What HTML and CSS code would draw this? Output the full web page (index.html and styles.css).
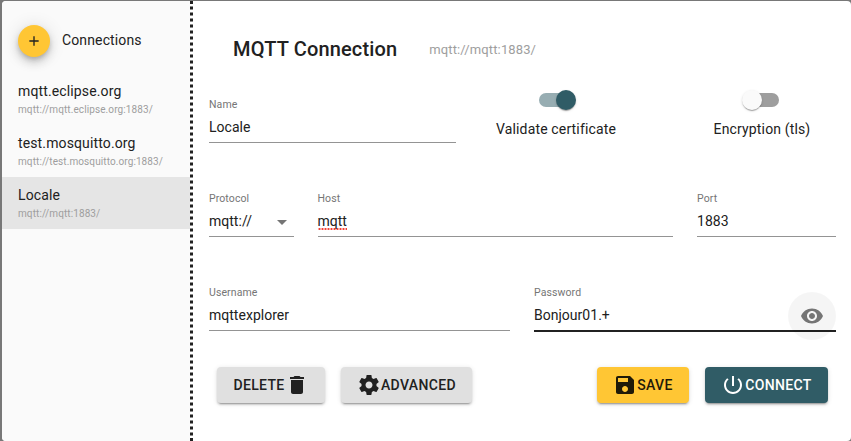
FILE: index.html
```html
<!DOCTYPE html>
<html lang="en">
<head>
<meta charset="utf-8">
<title>MQTT Connection</title>
<link rel="stylesheet" href="styles.css">
</head>
<body>
<div class="dialog">
  <aside class="sidebar">
    <div class="sidebar-head">
      <span class="add"><svg viewBox="0 0 24 24" width="16" height="16"><path d="M19 13h-6v6h-2v-6H5v-2h6V5h2v6h6v2z"/></svg></span>
      <span class="sidebar-title">Connections</span>
    </div>
    <ul class="list">
      <li class="item"><div class="item-name">mqtt.eclipse.org</div><div class="item-url">mqtt://mqtt.eclipse.org:1883/</div></li>
      <li class="item"><div class="item-name">test.mosquitto.org</div><div class="item-url">mqtt://test.mosquitto.org:1883/</div></li>
      <li class="item selected"><div class="item-name">Locale</div><div class="item-url">mqtt://mqtt:1883/</div></li>
    </ul>
  </aside>
  <main class="main">
    <header class="header"><h1 class="title">MQTT Connection</h1><span class="url">mqtt://mqtt:1883/</span></header>
    <div class="row row-name">
      <div class="field"><div class="label">Name</div><div class="value">Locale</div></div>
      <div class="toggle"><span class="switch on"><i class="thumb"></i></span><span class="toggle-label">Validate certificate</span></div>
      <div class="toggle"><span class="switch"><i class="thumb"></i></span><span class="toggle-label">Encryption (tls)</span></div>
    </div>
    <div class="row row-host">
      <div class="field"><div class="label">Protocol</div><div class="value select">mqtt://<svg viewBox="0 0 24 24" width="24" height="24"><path d="M7 10l5 5 5-5z"/></svg></div></div>
      <div class="field"><div class="label">Host</div><div class="value"><span class="misspelled">mqtt</span></div></div>
      <div class="field"><div class="label">Port</div><div class="value">1883</div></div>
    </div>
    <div class="row row-auth">
      <div class="field"><div class="label">Username</div><div class="value">mqttexplorer</div></div>
      <div class="field focused"><div class="label">Password</div><div class="value">Bonjour01.+</div>
        <span class="eye"><svg viewBox="0 0 24 24" width="24" height="24"><path d="M12 4.500C7 4.500 2.730 7.610 1 12c1.730 4.390 6 7.500 11 7.500s9.270-3.110 11-7.500c-1.730-4.390-6-7.500-11-7.500zM12 17c-2.760 0-5-2.240-5-5s2.240-5 5-5 5 2.240 5 5-2.240 5-5 5zm0-8c-1.660 0-3 1.340-3 3s1.340 3 3 3 3-1.340 3-3-1.340-3-3-3z"/></svg></span></div>
    </div>
    <footer class="actions">
      <span class="btn delete">DELETE<svg viewBox="0 0 24 24" width="24" height="24"><path d="M6 19c0 1.100.900 2 2 2h8c1.100 0 2-.900 2-2V7H6v12zM19 4h-3.500l-1-1h-5l-1 1H5v2h14V4z"/></svg></span>
      <span class="btn advanced"><svg viewBox="0 0 24 24" width="24" height="24"><path d="M19.430 12.980c.040-.320.070-.640.070-.980s-.030-.660-.070-.980l2.110-1.650c.190-.150.240-.420.120-.640l-2-3.460c-.120-.220-.390-.300-.610-.220l-2.490 1c-.520-.400-1.080-.730-1.690-.980l-.380-2.650C14.460 2.180 14.250 2 14 2h-4c-.250 0-.460.180-.490.420l-.380 2.650c-.610.250-1.170.590-1.690.980l-2.490-1c-.230-.090-.490 0-.610.220l-2 3.460c-.130.220-.070.490.120.640l2.110 1.650c-.040.320-.070.650-.070.980s.030.660.070.980l-2.110 1.650c-.190.150-.240.420-.120.640l2 3.460c.120.220.390.300.610.220l2.490-1c.520.400 1.080.730 1.690.980l.380 2.650c.030.240.240.420.490.420h4c.250 0 .460-.180.490-.420l.380-2.650c.610-.250 1.170-.590 1.690-.980l2.490 1c.230.090.490 0 .610-.220l2-3.460c.120-.220.070-.490-.120-.640l-2.110-1.650zM12 15.500c-1.930 0-3.500-1.570-3.500-3.500s1.570-3.500 3.500-3.500 3.500 1.570 3.500 3.500-1.570 3.500-3.500 3.500z"/></svg>ADVANCED</span>
      <span class="spacer"></span>
      <span class="btn save"><svg viewBox="0 0 24 24" width="24" height="24"><path d="M17 3H5c-1.110 0-2 .900-2 2v14c0 1.100.890 2 2 2h14c1.100 0 2-.900 2-2V7l-4-4zm-5 16c-1.660 0-3-1.340-3-3s1.340-3 3-3 3 1.340 3 3-1.340 3-3 3zm3-10H5V5h10v4z"/></svg>SAVE</span>
      <span class="btn connect"><svg viewBox="0 0 24 24" width="24" height="24"><path d="M13 3h-2v10h2V3zm4.830 2.170l-1.420 1.420C17.990 7.860 19 9.810 19 12c0 3.870-3.130 7-7 7s-7-3.130-7-7c0-2.190 1.010-4.140 2.580-5.420L6.170 5.170C4.230 6.820 3 9.260 3 12c0 4.970 4.030 9 9 9s9-4.030 9-9c0-2.740-1.230-5.180-3.170-6.830z"/></svg>CONNECT</span>
    </footer>
  </main>
</div>
</body>
</html>
```

FILE: styles.css
```css
* { box-sizing: border-box; }
body {
  margin: 0;
  height: 441px;
  overflow: hidden;
  padding: 1px 0 0 2px;
  background: #787878;
  font-family: Roboto, "Liberation Sans", sans-serif;
  font-size: 14px;
  color: #212121;
}
svg { fill: currentColor; flex: none; display: block; }
.dialog {
  display: flex;
  height: 440px;
  background: #fff;
  border-radius: 4px;
  overflow: hidden;
}
.sidebar { width: 188px; background: #fafafa; }
.main {
  width: 661px;
  padding: 0 15px 0 18px;
  background:
    linear-gradient(#212121, #212121) 0 0 / 3px 3px no-repeat,
    linear-gradient(#212121, #212121) 0 100% / 3px 3px no-repeat,
    linear-gradient(#8c8c8c 0 1px, #212121 1px 3px, #8c8c8c 3px 4px, transparent 4px) 0 5px / 3px 6px repeat-y;
}
.sidebar-head { display: flex; align-items: center; gap: 12px; height: 78px; padding-left: 16px; }
.add {
  display: flex; align-items: center; justify-content: center;
  width: 32px; height: 32px; margin-top: 2px;
  border-radius: 50%;
  background: #ffc634;
  box-shadow: 0 3px 5px -1px rgba(0,0,0,.2), 0 6px 10px rgba(0,0,0,.14), 0 1px 18px rgba(0,0,0,.12);
}
.sidebar-title { line-height: 20px; letter-spacing: .13px; }
.list { list-style: none; margin: 0; padding: 0; }
.item { height: 52px; padding: 6px 16px 0; white-space: nowrap; }
.item:first-child { height: 46px; padding-top: 0; }
.selected { background: #e5e5e5; }
.item-name { line-height: 24px; letter-spacing: .13px; }
.item-url { line-height: 14px; font-size: 10px; letter-spacing: .1px; color: #9e9e9e; }
.header { display: flex; align-items: center; height: 97px; padding-left: 25px; }
.title { margin: -2px 0 0; font-size: 20px; line-height: 32px; font-weight: 500; letter-spacing: .15px; }
.url { margin-left: 32px; font-size: 13px; letter-spacing: .12px; color: #9e9e9e; }
.row { display: grid; column-gap: 24px; padding-left: 1px; height: 94px; }
.row-name { grid-template-columns: 247px 200px 212px; column-gap: 0; }
.row-host { grid-template-columns: 84.5px 355.5px 139px; }
.row-auth { grid-template-columns: 301px 302px; }
.field { position: relative; letter-spacing: .02px; }
.label { font-size: 10.5px; line-height: 14px; color: #757575; letter-spacing: .1px; }
.value { height: 31px; line-height: 31px; border-bottom: 1px solid #949494; }
.select { display: flex; justify-content: space-between; }
.select svg { margin-top: 4px; color: #757575; }
.misspelled {
  padding-bottom: 1px;
  background: radial-gradient(circle, #f44336 .9px, transparent 1.3px) 0 100% / 3px 2px repeat-x;
}
.focused .value { height: 32px; border-bottom: 2px solid #212121; }
.eye {
  position: absolute; right: 0; top: 6px;
  display: flex; align-items: center; justify-content: center;
  width: 48px; height: 48px; border-radius: 50%;
  background: rgba(0,0,0,.04); color: #757575;
}
.toggle { display: flex; flex-direction: column; align-items: center; margin-top: -5px; }
.switch { position: relative; width: 34px; height: 14px; border-radius: 7px; background: #9e9e9e; }
.switch.on { background: #97adb2; }
.thumb {
  position: absolute; left: -3px; top: -3px;
  width: 20px; height: 20px; border-radius: 50%;
  background: #fafafa;
  box-shadow: 0 2px 1px -1px rgba(0,0,0,.2), 0 1px 1px rgba(0,0,0,.14), 0 1px 3px rgba(0,0,0,.12);
}
.on .thumb { left: 17px; background: #305c66; }
.toggle-label { margin-top: 12px; line-height: 20px; letter-spacing: .15px; }
.actions { display: flex; gap: 16px; padding: 0 8px 0 9px; margin-top: -13px; }
.btn {
  display: flex; align-items: center; justify-content: center;
  height: 36px; border-radius: 4px;
  background: #e0e0e0;
  font-weight: 500; letter-spacing: .35px;
  box-shadow: 0 3px 1px -2px rgba(0,0,0,.2), 0 2px 2px rgba(0,0,0,.14), 0 1px 5px rgba(0,0,0,.12);
}
.delete { width: 108px; }
.advanced { width: 131px; }
.spacer { flex: 1; }
.save { width: 92px; background: #ffc634; color: #1f1a08; }
.connect { width: 123px; background: #305c66; color: #fff; }
```
